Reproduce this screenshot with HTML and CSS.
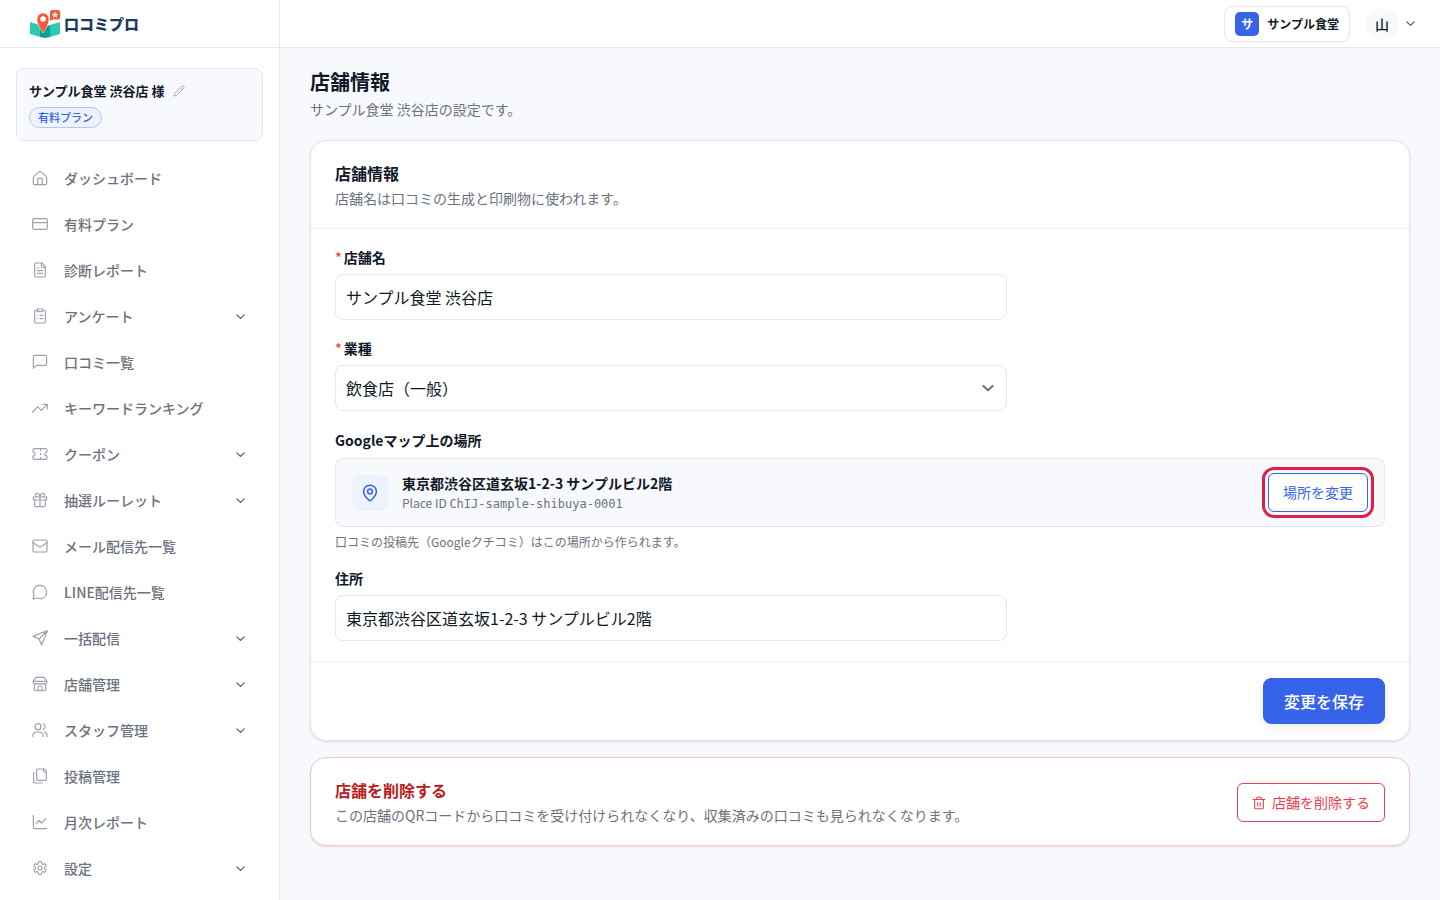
FILE: index.html
```html
<!DOCTYPE html>
<html lang="ja">

<head>
    <meta charset="UTF-8">
    <meta name="viewport" content="width=device-width, initial-scale=1.0">
    <title>店舗情報 | 口コミプロ</title>
    <link rel="stylesheet" href="styles.css">
</head>

<body>

    <!-- shared icons -->
    <svg class="sprite" aria-hidden="true">
        <symbol id="chevron" viewBox="0 0 24 24"><path d="m4 8.500 8 7.500 8-7.500"/></symbol>
        <symbol id="home" viewBox="0 0 24 24"><path d="M2 11.500a2 2 0 0 1 .7-1.500L10.700 2.500a2 2 0 0 1 2.600 0L21.300 10a2 2 0 0 1 .7 1.500V20a2 2 0 0 1-2 2H4a2 2 0 0 1-2-2z"/><path d="M8.500 22v-8.500a1 1 0 0 1 1-1h5a1 1 0 0 1 1 1V22"/></symbol>
        <symbol id="card" viewBox="0 0 24 24"><rect x="1" y="4" width="22" height="16" rx="2"/><path d="M1 10h22"/></symbol>
        <symbol id="file" viewBox="0 0 24 24"><path d="M15 1.500H6a2 2 0 0 0-2 2v17a2 2 0 0 0 2 2h12a2 2 0 0 0 2-2V6.500z"/><path d="M14 1.500V6a2 2 0 0 0 2 2h4M10 9H8M16 13H8M16 17H8"/></symbol>
        <symbol id="clipboard" viewBox="0 0 24 24"><rect x="8" y="1.500" width="8" height="4" rx="1"/><path d="M16 3.500h2a2 2 0 0 1 2 2v15a2 2 0 0 1-2 2H6a2 2 0 0 1-2-2v-15a2 2 0 0 1 2-2h2M12 11h4M12 16h4M8 11h.01M8 16h.01"/></symbol>
        <symbol id="message" viewBox="0 0 24 24"><path d="M22 15a2 2 0 0 1-2 2H6.500L2 21.500V4a2 2 0 0 1 2-2h16a2 2 0 0 1 2 2z"/></symbol>
        <symbol id="trend" viewBox="0 0 24 24"><path d="M16 6.500h7v7"/><path d="m23 6.500-9 9-5.500-5.500L1 18"/></symbol>
        <symbol id="ticket" viewBox="0 0 24 24"><path d="M1.500 9a3 3 0 0 1 0 6v3a2 2 0 0 0 2 2h17a2 2 0 0 0 2-2v-3a3 3 0 0 1 0-6V6a2 2 0 0 0-2-2h-17a2 2 0 0 0-2 2zM13 5v2M13 11v2M13 17v2"/></symbol>
        <symbol id="gift" viewBox="0 0 24 24"><rect x="2" y="7.500" width="20" height="4.500" rx="1"/><path d="M12 7.500V22M20 12v8a2 2 0 0 1-2 2H6a2 2 0 0 1-2-2v-8M7.500 7.500a2.500 2.500 0 0 1 0-5.500C11 2 12 7.500 12 7.500S13 2 16.500 2a2.500 2.500 0 0 1 0 5.500"/></symbol>
        <symbol id="mail" viewBox="0 0 24 24"><rect x="1.500" y="3" width="21" height="18" rx="2"/><path d="m22.500 7-9.400 6a2 2 0 0 1-2.200 0L1.500 7"/></symbol>
        <symbol id="bubble" viewBox="0 0 24 24"><path d="M7.500 21A10 10 0 1 0 3 16.500L1.500 22.500Z"/></symbol>
        <symbol id="send" viewBox="0 0 24 24"><path d="M14.500 22.500 22.900 1.800a.5.5 0 0 0-.7-.7L1.500 9.500l9 4zM22.500 1.500l-12 12"/></symbol>
        <symbol id="store" viewBox="0 0 24 24"><path d="m1.500 8 3.700-5.200A2 2 0 0 1 6.800 2h10.400a2 2 0 0 1 1.600.8L22.500 8zM3.500 12v8a2 2 0 0 0 2 2h13a2 2 0 0 0 2-2v-8M9 22v-5a2 2 0 0 1 2-2h2a2 2 0 0 1 2 2v5M1.500 8v1.500a2.600 2.600 0 0 0 4.500 1.700 3 3 0 0 0 4 0 3 3 0 0 0 4 0 3 3 0 0 0 4 0 2.600 2.600 0 0 0 4.500-1.700V8"/></symbol>
        <symbol id="users" viewBox="0 0 24 24"><circle cx="9" cy="7" r="4.500"/><path d="M1.500 22v-2a5 5 0 0 1 5-5h5a5 5 0 0 1 5 5v2M22.500 22v-2a5 5 0 0 0-3.500-4.800M16.500 2.700a4.500 4.500 0 0 1 0 8.600"/></symbol>
        <symbol id="files" viewBox="0 0 24 24"><path d="M19 1.500H9a2 2 0 0 0-2 2v13a2 2 0 0 0 2 2h10.500a2 2 0 0 0 2-2V5.500z"/><path d="M17 1.500V4a2 2 0 0 0 2 2h2.500M2.500 6.500v14a2 2 0 0 0 2 2H16"/></symbol>
        <symbol id="chart" viewBox="0 0 24 24"><path d="M2 2v18a2 2 0 0 0 2 2h18"/><path d="m6.500 14.500 4-5 4 4L21 7"/></symbol>
        <symbol id="gear" viewBox="0 0 24 24"><path d="M12.220 2h-.44a2 2 0 0 0-2 2v.18a2 2 0 0 1-1 1.730l-.43.25a2 2 0 0 1-2 0l-.15-.08a2 2 0 0 0-2.730.73l-.22.38a2 2 0 0 0 .73 2.730l.15.1a2 2 0 0 1 1 1.720v.51a2 2 0 0 1-1 1.740l-.15.09a2 2 0 0 0-.73 2.730l.22.38a2 2 0 0 0 2.730.73l.15-.08a2 2 0 0 1 2 0l.43.25a2 2 0 0 1 1 1.730V20a2 2 0 0 0 2 2h.44a2 2 0 0 0 2-2v-.18a2 2 0 0 1 1-1.730l.43-.25a2 2 0 0 1 2 0l.15.08a2 2 0 0 0 2.730-.73l.22-.39a2 2 0 0 0-.73-2.730l-.15-.08a2 2 0 0 1-1-1.740v-.5a2 2 0 0 1 1-1.740l.15-.09a2 2 0 0 0 .73-2.730l-.22-.38a2 2 0 0 0-2.730-.73l-.15.08a2 2 0 0 1-2 0l-.43-.25a2 2 0 0 1-1-1.730V4a2 2 0 0 0-2-2z"/><circle cx="12" cy="12" r="3"/></symbol>
        <symbol id="pencil" viewBox="0 0 24 24"><path d="M21.200 6.800a1 1 0 0 0-4-4L3.800 16.200a2 2 0 0 0-.5.800L2 21.400a.5.500 0 0 0 .6.600L7 20.700a2 2 0 0 0 .8-.5zM15 5l4 4"/></symbol>
        <symbol id="pin" viewBox="0 0 24 24"><path d="M20.500 10c0 5-5.500 10.200-7.400 11.800a1.800 1.800 0 0 1-2.200 0C9 20.200 3.500 15 3.500 10a8.500 8.500 0 0 1 17 0"/><circle cx="12" cy="10" r="3.200"/></symbol>
        <symbol id="trash" viewBox="0 0 24 24"><path d="M2 6h20M19.500 6v14a2 2 0 0 1-2 2h-11a2 2 0 0 1-2-2V6M8 6V4a2 2 0 0 1 2-2h4a2 2 0 0 1 2 2v2M10 11v6M14 11v6"/></symbol>
    </svg>

    <div class="layout">
        <aside class="sidebar">
            <a href="#" class="logo">
                <svg class="logo-mark" viewBox="0 0 32 30" aria-hidden="true">
                    <path d="M1 13l10 3v12L1 25z" fill="#2cc9b5"/>
                    <path d="M11 16l5 2 5-2v12l-5 1-5-1z" fill="#159d91"/>
                    <path d="M21 16l10-3v12l-10 3z" fill="#2cc9b5"/>
                    <path d="M14 24C11 19 8 15 8 10a6 6 0 0 1 12 0c0 5-3 9-6 14z" fill="#f4583c" stroke="#fff" stroke-width=".5"/>
                    <circle cx="14" cy="10" r="2.800" fill="#fff"/>
                    <path d="M23 1h6a2.200 2.200 0 0 1 2.200 2.200v5a2.200 2.200 0 0 1-2.200 2.200h-5L21 12V3.200A2.200 2.200 0 0 1 23 1z" fill="#f4583c"/>
                    <path d="M26 2.500l1 2.200 2.300.2-1.700 1.600.5 2.300-2.100-1.200-2.100 1.200.5-2.300-1.700-1.600 2.300-.2z" fill="#fff"/>
                </svg>
                <span class="logo-text">口コミプロ</span>
            </a>

            <div class="shop-card">
                <div class="shop-name">
                    <span>サンプル食堂 渋谷店 様</span>
                    <button type="button" class="edit-btn" aria-label="編集"><svg class="icon"><use href="#pencil"/></svg></button>
                </div>
                <span class="plan-badge">有料プラン</span>
            </div>

            <nav class="menu">
                <a href="#"><svg class="icon"><use href="#home"/></svg><span>ダッシュボード</span></a>
                <a href="#"><svg class="icon"><use href="#card"/></svg><span>有料プラン</span></a>
                <a href="#"><svg class="icon"><use href="#file"/></svg><span>診断レポート</span></a>
                <button type="button"><svg class="icon"><use href="#clipboard"/></svg><span>アンケート</span><svg class="icon arrow"><use href="#chevron"/></svg></button>
                <a href="#"><svg class="icon"><use href="#message"/></svg><span>口コミ一覧</span></a>
                <a href="#"><svg class="icon"><use href="#trend"/></svg><span>キーワードランキング</span></a>
                <button type="button"><svg class="icon"><use href="#ticket"/></svg><span>クーポン</span><svg class="icon arrow"><use href="#chevron"/></svg></button>
                <button type="button"><svg class="icon"><use href="#gift"/></svg><span>抽選ルーレット</span><svg class="icon arrow"><use href="#chevron"/></svg></button>
                <a href="#"><svg class="icon"><use href="#mail"/></svg><span>メール配信先一覧</span></a>
                <a href="#"><svg class="icon"><use href="#bubble"/></svg><span>LINE配信先一覧</span></a>
                <button type="button"><svg class="icon"><use href="#send"/></svg><span>一括配信</span><svg class="icon arrow"><use href="#chevron"/></svg></button>
                <button type="button"><svg class="icon"><use href="#store"/></svg><span>店舗管理</span><svg class="icon arrow"><use href="#chevron"/></svg></button>
                <button type="button"><svg class="icon"><use href="#users"/></svg><span>スタッフ管理</span><svg class="icon arrow"><use href="#chevron"/></svg></button>
                <a href="#"><svg class="icon"><use href="#files"/></svg><span>投稿管理</span></a>
                <a href="#"><svg class="icon"><use href="#chart"/></svg><span>月次レポート</span></a>
                <button type="button"><svg class="icon"><use href="#gear"/></svg><span>設定</span><svg class="icon arrow"><use href="#chevron"/></svg></button>
            </nav>
        </aside>

        <div class="page">
            <header class="topbar">
                <button type="button" class="org-btn"><span class="org-mark">サ</span>サンプル食堂</button>
                <button type="button" class="user-btn"><span class="avatar">山</span><svg class="icon arrow"><use href="#chevron"/></svg></button>
            </header>

            <main>
                <h1>店舗情報</h1>
                <p class="lead">サンプル食堂 渋谷店の設定です。</p>

                <form class="card">
                    <div class="card-header">
                        <h2>店舗情報</h2>
                        <p>店舗名は口コミの生成と印刷物に使われます。</p>
                    </div>

                    <div class="card-body">
                        <div class="field">
                            <label for="shopName"><span class="required">*</span>店舗名</label>
                            <input type="text" id="shopName" value="サンプル食堂 渋谷店" required>
                        </div>
                        <div class="field">
                            <label for="category"><span class="required">*</span>業種</label>
                            <div class="select-wrap">
                                <select id="category" required>
                                    <option>飲食店（一般）</option>
                                </select>
                                <svg class="icon"><use href="#chevron"/></svg>
                            </div>
                        </div>
                        <div class="field">
                            <h3>Googleマップ上の場所</h3>
                            <div class="place">
                                <span class="place-icon"><svg class="icon"><use href="#pin"/></svg></span>
                                <div class="place-text">
                                    <strong>東京都渋谷区道玄坂1-2-3 サンプルビル2階</strong>
                                    <p>Place ID <code>ChIJ-sample-shibuya-0001</code></p>
                                </div>
                                <button type="button" class="btn btn-outline">場所を変更</button>
                            </div>
                            <p class="help">口コミの投稿先（Googleクチコミ）はこの場所から作られます。</p>
                        </div>
                        <div class="field">
                            <label for="address">住所</label>
                            <input type="text" id="address" value="東京都渋谷区道玄坂1-2-3 サンプルビル2階">
                        </div>
                    </div>

                    <div class="card-footer">
                        <button type="submit" class="btn btn-primary">変更を保存</button>
                    </div>
                </form>

                <section class="card danger">
                    <div>
                        <h2>店舗を削除する</h2>
                        <p>この店舗のQRコードから口コミを受け付けられなくなり、収集済みの口コミも見られなくなります。</p>
                    </div>
                    <button type="button" class="btn btn-danger"><svg class="icon"><use href="#trash"/></svg>店舗を削除する</button>
                </section>
            </main>
        </div>
    </div>

</body>
</html>
```

FILE: styles.css
```css
* {
    box-sizing: border-box;
}

body {
    margin: 0;
    font-family: "Noto Sans CJK JP", sans-serif;
    font-size: 14px;
    line-height: 20px;
    color: #111827;
    background-color: #f8f9fd;
}

h1, h2, h3, p {
    margin: 0;
}

button, input, select {
    font: inherit;
    color: inherit;
}

button {
    cursor: pointer;
}

a {
    text-decoration: none;
    color: inherit;
}

.sprite {
    display: none;
}

.icon {
    width: 16px;
    height: 16px;
    flex-shrink: 0;
    fill: none;
    stroke: currentColor;
    stroke-width: 1.8;
    stroke-linecap: round;
    stroke-linejoin: round;
}

.arrow {
    width: 11px;
    height: 11px;
    stroke-width: 2.6;
    color: #4b5563;
}

.layout {
    display: flex;
    min-height: 100vh;
}

/* sidebar */
.sidebar {
    width: 280px;
    height: 100vh;
    flex-shrink: 0;
    overflow: hidden;
    background-color: #fff;
    border-right: 1px solid #e5e7eb;
}

.logo {
    display: flex;
    align-items: center;
    gap: 3px;
    height: 48px;
    padding-left: 29px;
    border-bottom: 1px solid #e5e7eb;
}

.logo-mark {
    width: 32px;
    height: 30px;
}

.logo-text {
    font-size: 15px;
    font-weight: 900;
    line-height: 22px;
    color: #1b3a63;
}

.shop-card {
    margin: 20px 16px 14px;
    padding: 12px;
    border: 1px solid #e5e7eb;
    border-radius: 8px;
    background-color: #f8f9fd;
}

.shop-name {
    display: flex;
    align-items: center;
    gap: 8px;
    height: 20px;
    margin-bottom: 6px;
    font-size: 13px;
    font-weight: 700;
    line-height: 18px;
}

.edit-btn {
    display: flex;
    padding: 0;
    border: none;
    background: none;
    color: #9ca3af;
}

.edit-btn .icon {
    width: 12px;
    height: 12px;
}

.plan-badge {
    display: block;
    width: fit-content;
    padding: 0 8px;
    border: 1px solid #b4c6f5;
    border-radius: 11px;
    font-size: 11px;
    font-weight: 500;
    line-height: 19px;
    color: #3563e9;
    background-color: #eef2fd;
}

.menu a,
.menu button {
    display: flex;
    align-items: center;
    gap: 16px;
    width: 100%;
    height: 46px;
    padding: 0 33px 0 32px;
    border: none;
    background: none;
    font-weight: 500;
    line-height: 21px;
    text-align: left;
    color: #6b7280;
}

.menu .icon {
    color: #9ca3af;
}

.menu .arrow {
    margin-left: auto;
    color: #4b5563;
}

/* header */
.page {
    flex: 1;
    min-width: 0;
}

.topbar {
    display: flex;
    justify-content: flex-end;
    align-items: center;
    gap: 16px;
    height: 48px;
    padding: 0 24px;
    border-bottom: 1px solid #e5e7eb;
    background-color: #fff;
}

.org-btn {
    display: flex;
    align-items: center;
    gap: 8px;
    height: 36px;
    padding: 0 10px;
    border: 1px solid #e5e7eb;
    border-radius: 8px;
    background-color: #fff;
    font-size: 12px;
    font-weight: 700;
    line-height: 18px;
}

.org-mark {
    width: 24px;
    border-radius: 5px;
    line-height: 24px;
    text-align: center;
    color: #fff;
    background-color: #3563e9;
}

.user-btn {
    display: flex;
    align-items: center;
    gap: 7px;
    padding: 0;
    border: none;
    background: none;
}

.avatar {
    width: 32px;
    border-radius: 50%;
    font-weight: 500;
    line-height: 32px;
    text-align: center;
    background-color: #f8f9fd;
}

/* content */
main {
    padding: 20px 30px;
}

h1 {
    margin-bottom: 2px;
    font-size: 20px;
    line-height: 28px;
}

.lead {
    margin-bottom: 20px;
    line-height: 22px;
    color: #6b7280;
}

.card {
    margin-bottom: 16px;
    border: 1px solid #e5e7eb;
    border-radius: 16px;
    background-color: #fff;
    box-shadow: 0 1px 2px rgba(17, 24, 39, 0.12);
}

.card h2 {
    font-size: 16px;
    line-height: 25px;
}

.card-header {
    padding: 20px 24px 18px;
    border-bottom: 1px solid #f0f1f4;
}

.card-header p,
.danger p {
    line-height: 24px;
    color: #6b7280;
}

.card-body {
    display: flex;
    flex-direction: column;
    gap: 20px;
    padding: 20px 24px;
}

.field label,
.field h3 {
    display: block;
    margin-bottom: 9px;
    font-size: 14px;
    font-weight: 700;
    line-height: 16px;
}

.field h3 {
    line-height: 18px;
}

.required {
    margin-right: 2px;
    font-weight: 500;
    color: #ef4444;
}

.field input,
.field select {
    display: block;
    width: 100%;
    height: 46px;
    padding: 0 10px;
    border: 1px solid #e5e7eb;
    border-radius: 8px;
    background-color: #fff;
    font-size: 16px;
}

.field input,
.select-wrap {
    max-width: 672px;
}

.select-wrap {
    position: relative;
}

.field select {
    appearance: none;
}

.select-wrap .icon {
    position: absolute;
    top: 16px;
    right: 12px;
    width: 14px;
    height: 14px;
    stroke-width: 3.5;
    color: #6b7280;
    pointer-events: none;
}

.place {
    display: flex;
    align-items: center;
    gap: 14px;
    padding: 14px 16px;
    border: 1px solid #e5e7eb;
    border-radius: 8px;
    background-color: #f8f9fd;
}

.place-icon {
    display: flex;
    align-items: center;
    justify-content: center;
    width: 36px;
    height: 36px;
    border-radius: 8px;
    color: #3563e9;
    background-color: #eef2fd;
}

.place-icon .icon {
    width: 18px;
    height: 18px;
    stroke-width: 2;
}

.place-text {
    flex: 1;
}

.place-text strong {
    display: block;
    line-height: 21px;
}

.place-text p {
    font-size: 12px;
    line-height: 18px;
    color: #6b7280;
}

.place-text code {
    font-family: "DejaVu Sans Mono", monospace;
    font-size: 12px;
    line-height: 1;
}

.help {
    margin-top: 7px;
    font-size: 12px;
    line-height: 16px;
    color: #6b7280;
}

.card-footer {
    display: flex;
    justify-content: flex-end;
    padding: 16px 24px;
    border-top: 1px solid #f0f1f4;
}

/* buttons */
.btn {
    display: flex;
    align-items: center;
    justify-content: center;
    gap: 6px;
    flex-shrink: 0;
    height: 39px;
    padding: 0 14px;
    border: 1px solid;
    border-radius: 6px;
    background-color: #fff;
    line-height: 21px;
}

.btn-outline {
    color: #3563e9;
    outline: 3px solid #e11d48;
    outline-offset: 3px;
}

.btn-primary {
    height: 46px;
    padding: 0 20px;
    border-color: #3563e9;
    border-radius: 8px;
    font-size: 16px;
    font-weight: 500;
    color: #fff;
    background-color: #3563e9;
    box-shadow: 0 4px 10px rgba(17, 24, 39, 0.08);
}

.btn-danger {
    color: #ef3e50;
}

.btn-danger .icon {
    width: 14px;
    height: 14px;
}

.danger {
    display: flex;
    align-items: center;
    justify-content: space-between;
    gap: 16px;
    padding: 20px 24px 18px;
    border-color: #f9c6cd;
}

.danger h2 {
    color: #b91c1c;
}
```
